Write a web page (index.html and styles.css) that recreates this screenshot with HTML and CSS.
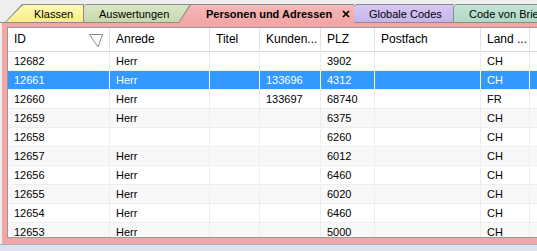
FILE: index.html
```html
<!DOCTYPE html>
<html lang="de">

<head>
    <meta charset="UTF-8">
    <meta name="viewport" content="width=device-width, initial-scale=1.0">
    <title>Personen und Adressen</title>
    <link rel="stylesheet" href="styles.css">
</head>

<body>
    <!-- Document tabs -->
    <div class="tabbar">
        <div class="tab tab-first tab-yellow" style="width: 79px">
            <div class="tab-face">Klassen</div>
        </div>
        <div class="tab tab-green" style="width: 107px">
            <div class="tab-face">Auswertungen</div>
        </div>
        <div class="tab tab-active" style="width: 176px">
            <div class="tab-face">
                <span>Personen und Adressen</span>
                <svg class="close" width="8" height="8" viewBox="0 0 8 8">
                    <path d="M1 1 L7 7 M7 1 L1 7" stroke="#000" stroke-width="1.7" />
                </svg>
            </div>
        </div>
        <div class="tab tab-purple" style="width: 101px">
            <div class="tab-face">Globale Codes</div>
        </div>
        <div class="tab tab-teal" style="width: 110px">
            <div class="tab-face">Code von Briefen</div>
        </div>
    </div>

    <!-- Frame of the active document -->
    <div class="frame">
        <div class="grid">
            <table>
                <colgroup>
                    <col style="width: 102px">
                    <col style="width: 100px">
                    <col style="width: 50px">
                    <col style="width: 61px">
                    <col style="width: 54px">
                    <col style="width: 106px">
                    <col style="width: 49px">
                    <col style="width: 30px">
                </colgroup>
                <thead>
                    <tr>
                        <th>
                            <div class="th-filter">
                                <span>ID</span>
                                <svg width="15" height="14" viewBox="0 0 15 14">
                                    <path d="M0.5 0.5 H13.5 L9 13 Z" fill="none" stroke="#8a8a8a" />
                                </svg>
                            </div>
                        </th>
                        <th>Anrede</th>
                        <th>Titel</th>
                        <th>Kunden...</th>
                        <th>PLZ</th>
                        <th>Postfach</th>
                        <th>Land ...</th>
                        <th></th>
                    </tr>
                </thead>
                <tbody id="rows"></tbody>
            </table>
        </div>
    </div>

    <div class="status"></div>

    <script>
        const people = [
            { id: 12682, anrede: 'Herr', kunde: '', plz: '3902', land: 'CH' },
            { id: 12661, anrede: 'Herr', kunde: '133696', plz: '4312', land: 'CH', selected: true },
            { id: 12660, anrede: 'Herr', kunde: '133697', plz: '68740', land: 'FR' },
            { id: 12659, anrede: 'Herr', kunde: '', plz: '6375', land: 'CH' },
            { id: 12658, anrede: '', kunde: '', plz: '6260', land: 'CH' },
            { id: 12657, anrede: 'Herr', kunde: '', plz: '6012', land: 'CH' },
            { id: 12656, anrede: 'Herr', kunde: '', plz: '6460', land: 'CH' },
            { id: 12655, anrede: 'Herr', kunde: '', plz: '6020', land: 'CH' },
            { id: 12654, anrede: 'Herr', kunde: '', plz: '6460', land: 'CH' },
            { id: 12653, anrede: 'Herr', kunde: '', plz: '5000', land: 'CH' }
        ];

        const rows = document.getElementById('rows');
        people.forEach(p => {
            rows.innerHTML += `
                <tr class="${p.selected ? 'selected' : ''}">
                    <td>${p.id}</td>
                    <td>${p.anrede}</td>
                    <td></td>
                    <td>${p.kunde}</td>
                    <td>${p.plz}</td>
                    <td></td>
                    <td>${p.land}</td>
                    <td></td>
                </tr>
            `;
        });
    </script>
</body>

</html>
```

FILE: styles.css
```css
/* Page */
body {
    margin: 0;
    width: 537px;
    height: 251px;
    overflow: hidden;
    background-color: #eeeeee;
    font-family: "Liberation Sans", Arial, sans-serif;
    color: #000;
}

/* Tab strip */
.tabbar {
    display: flex;
    align-items: flex-end;
    height: 22px;
    padding-left: 5px;
    border-bottom: 1px solid #8c8c8c;
    white-space: nowrap;
}

.tab {
    flex: none;
    height: 18px;
    background-color: #8c8c8c;
    margin-left: -1px;
    clip-path: polygon(0 3px, 3px 0, 100% 0, 100% 100%, 0 100%);
}

.tab-face {
    display: flex;
    align-items: center;
    height: 17px;
    margin: 1px 0 0 1px;
    padding-left: 15px;
    font-size: 11px;
    clip-path: polygon(0 2px, 2px 0, 100% 0, 100% 100%, 0 100%);
}

.tab-first {
    margin-left: 0;
    clip-path: polygon(0 100%, 17px 0, 100% 0, 100% 100%);
}

.tab-first .tab-face {
    margin-right: 1px;
    padding-left: 28px;
    clip-path: polygon(0 100%, 17px 0, 100% 0, 100% 100%);
}

.tab-yellow .tab-face {
    background: linear-gradient(#fff9b4, #f8ec8c);
}

.tab-green .tab-face {
    background: linear-gradient(#d9e6c4, #c8d8ae);
}

.tab-purple .tab-face {
    background: linear-gradient(#d6c7f2, #c7b5ea);
}

.tab-teal .tab-face {
    background: linear-gradient(#c2e5d6, #afd8c6);
}

/* Selected tab */
.tab-active {
    position: relative;
    z-index: 1;
    height: 19px;
    margin-left: -12px;
    margin-bottom: -1px;
    clip-path: polygon(0 100%, 12px 0, 100% 0, 100% 100%);
}

.tab-active .tab-face {
    height: 18px;
    padding-left: 27px;
    padding-bottom: 1px;
    box-sizing: border-box;
    font-weight: bold;
    background: linear-gradient(#f6b8b8, #f3a6a6);
    clip-path: polygon(0 100%, 12px 0, 100% 0, 100% 100%);
}

.close {
    margin-left: 10px;
}

/* Frame round the grid */
.frame {
    margin-left: 2px;
    padding: 4px 0 6px 5px;
    background-color: #f3a6a6;
}

.grid {
    height: 209px;
    overflow: hidden;
    background-color: #fff;
    border: 1px solid #9a9a9a;
    border-right: none;
}

table {
    table-layout: fixed;
    width: 552px;
    border-collapse: separate;
    border-spacing: 0;
}

th {
    height: 23px;
    padding: 0 5px 0 6px;
    font-size: 12px;
    font-weight: normal;
    text-align: left;
    line-height: 23px;
    white-space: nowrap;
    border-right: 1px solid #e2e2e2;
    border-bottom: 1px solid #d6d6d6;
}

.th-filter {
    display: flex;
    align-items: center;
    justify-content: space-between;
}

.th-filter svg {
    margin-top: 2px;
}

td {
    padding: 0 5px 0 6px;
    font-size: 11px;
    line-height: 18px;
    white-space: nowrap;
    overflow: hidden;
    border-right: 1px solid #eeeeee;
    border-bottom: 1px solid #eeeeee;
}

tbody tr:nth-child(even) td {
    background-color: #f8f8f8;
}

tbody tr.selected td {
    background-color: #3399ff;
    color: #fff;
    border-right-color: #fff;
}

/* Bottom strip */
.status {
    height: 7px;
    background-color: #dbe1ed;
    border-top: 1px solid #a8b0bf;
}
```
